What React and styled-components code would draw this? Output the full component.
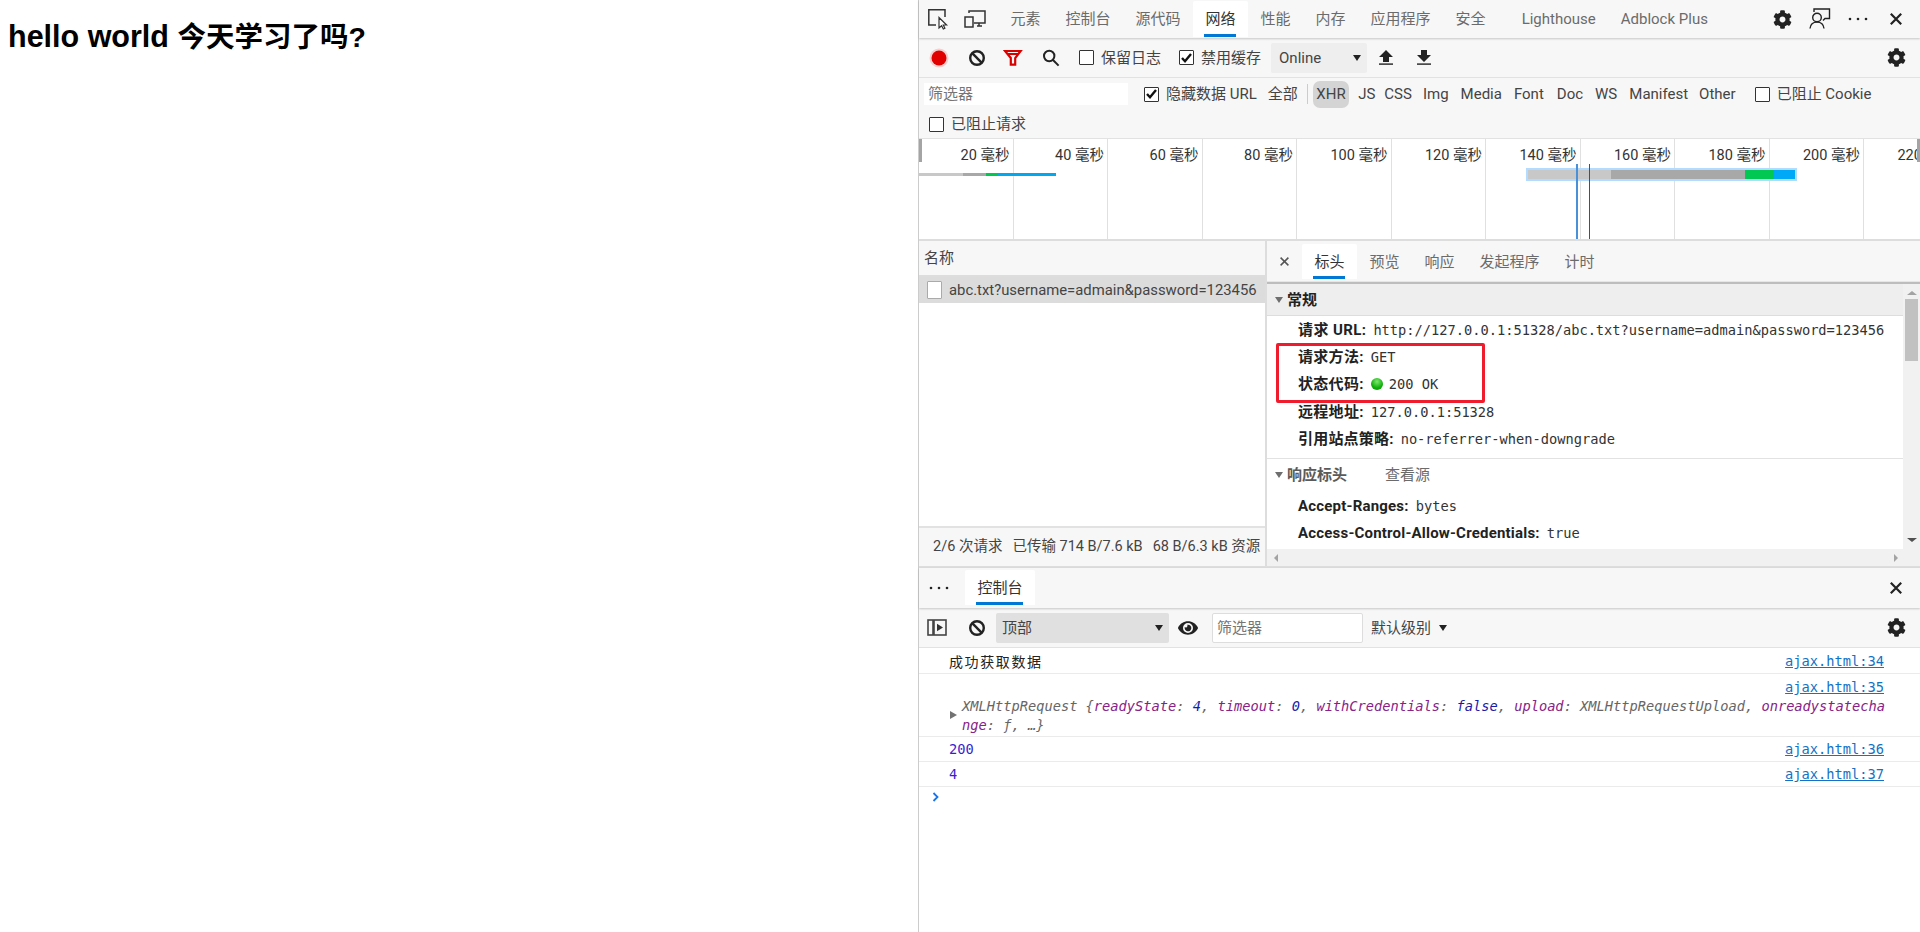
import React from 'react'
import styled, { createGlobalStyle } from 'styled-components'
import { FaCog, FaEye } from 'react-icons/fa'

const UI_FONT = `Roboto, "Noto Sans CJK SC", sans-serif`
const MONO_FONT = `"DejaVu Sans Mono", "Noto Sans CJK SC", monospace`

const GlobalStyle = createGlobalStyle`
  html, body { margin: 0; padding: 0; background: #fff; }
  body { font-family: ${UI_FONT}; font-size: 15px; color: #333; overflow: hidden; }
  * { box-sizing: border-box; }
`

const Page = styled.div`
  display: flex;
  height: 932px;
`

const Viewport = styled.main`
  width: 918px;
  flex: none;
  padding: 18px 8px;
  h1 {
    margin: 0;
    font: 700 30.5px/36px "Liberation Sans", "Noto Sans CJK SC", sans-serif;
    color: #000;
    span { font-size: 28.5px; }
  }
`

const DevTools = styled.section`
  flex: 1;
  min-width: 0;
  display: flex;
  flex-direction: column;
  border-left: 1px solid #ccc;
`

const TabBar = styled.div`
  display: flex;
  align-items: stretch;
  flex: none;
  height: ${p => p.$h}px;
  padding-top: ${p => p.$top || 0}px;
  padding-bottom: ${p => p.$bottom || 0}px;
  background: #f7f7f7;
  box-shadow: 0 1px 2px rgba(0, 0, 0, 0.2);
  position: relative;
  z-index: 1;
`

const Tab = styled.div`
  display: flex;
  align-items: center;
  justify-content: center;
  position: relative;
  padding: 0 12.5px;
  margin-left: ${p => p.$ml || 0}px;
  line-height: 20px;
  color: ${p => (p.$active ? '#333' : '#6b6b6b')};
  background: ${p => (p.$active ? '#fff' : 'transparent')};
  border-radius: 2px 2px 0 0;
  white-space: nowrap;
  ${p => p.$active && `
    &::after {
      content: '';
      position: absolute;
      left: 11px;
      right: 12px;
      bottom: 0;
      height: 3px;
      background: #0078d4;
    }
  `}
`

const IconSlot = styled.div`
  display: flex;
  align-items: center;
  justify-content: center;
  flex: none;
  width: ${p => p.$w || 24}px;
  margin-left: ${p => p.$ml || 0}px;
  color: #222;
`

const Spacer = styled.div`
  flex: ${p => (p.$w ? 'none' : 1)};
  width: ${p => (p.$w ? `${p.$w}px` : 'auto')};
`

const Toolbar = styled.div`
  display: flex;
  align-items: center;
  flex: none;
  height: ${p => p.$h}px;
  background: #f7f7f7;
  border-bottom: 1px solid #e2e2e2;
`

const Box = styled.span`
  display: flex;
  align-items: center;
  justify-content: center;
  flex: none;
  width: 15px;
  height: 15px;
  border: 1px solid #333;
  border-radius: 1px;
  background: #fff;
`

const CheckLabel = styled.label`
  display: flex;
  align-items: center;
  gap: 7px;
  margin-left: ${p => p.$ml || 0}px;
  line-height: 20px;
  white-space: nowrap;
  color: #444;
`

const SelectBox = styled.div`
  display: flex;
  align-items: center;
  justify-content: space-between;
  flex: none;
  width: ${p => p.$w}px;
  height: 30px;
  margin-left: ${p => p.$ml || 0}px;
  padding: 0 6px 0 ${p => p.$pl || 8}px;
  background: ${p => p.$bg};
  border-radius: 2px;
  color: #444;
  line-height: 20px;
`

const Caret = styled.span`
  display: inline-block;
  flex: none;
  width: 0;
  height: 0;
  margin: 0 ${p => p.$mx || 0}px;
  border-left: ${p => p.$size || 4.5}px solid transparent;
  border-right: ${p => p.$size || 4.5}px solid transparent;
  border-top: ${p => (p.$size || 4.5) * 1.5}px solid ${p => p.$color || '#222'};
`

const FilterBlock = styled.div`
  flex: none;
  height: 61px;
  background: #f7f7f7;
  border-bottom: 1px solid #e2e2e2;
  display: flex;
  flex-direction: column;
`

const FilterRow = styled.div`
  display: flex;
  align-items: center;
  height: ${p => p.$h}px;
  padding-left: ${p => p.$pl || 0}px;
`

const TextInput = styled.div`
  flex: none;
  width: ${p => p.$w}px;
  height: ${p => p.$h}px;
  margin-left: ${p => p.$ml || 0}px;
  padding-left: 4px;
  background: #fff;
  border: ${p => (p.$border ? '1px solid #ddd' : 'none')};
  border-radius: ${p => (p.$border ? 2 : 0)}px;
  color: #757575;
  display: flex;
  align-items: center;
  line-height: 20px;
`

const Sep = styled.span`
  flex: none;
  width: 1px;
  height: 20px;
  margin-left: ${p => p.$ml || 0}px;
  background: #ccc;
`

const TypeBtn = styled.span`
  flex: none;
  margin-left: ${p => p.$ml || 0}px;
  padding: ${p => (p.$active ? '3px 3.5px' : '0')};
  line-height: ${p => (p.$active ? '21px' : '20px')};
  color: #444;
  background: ${p => (p.$active ? '#d4d4d4' : 'transparent')};
  border-radius: 7px;
`

const Overview = styled.div`
  flex: none;
  height: 102px;
  position: relative;
  overflow: hidden;
  background: #fff;
  border-bottom: 2px solid #ddd;
`

const Ticks = styled.div`
  display: flex;
  height: 100%;
  width: 1100px;
`

const TickCell = styled.div`
  flex: none;
  width: 94.5px;
  height: 100%;
  padding: 7px 3px 0 0;
  border-right: 1px solid #e0e0e0;
  text-align: right;
  line-height: 20px;
  font-size: 14.5px;
  white-space: nowrap;
  color: #333;
`

const Grabber = styled.span`
  position: absolute;
  top: 0;
  ${p => p.$side}: 0;
  width: 3px;
  height: 23px;
  background: #a4a4a4;
`

const BarTrack = styled.div`
  position: absolute;
  left: ${p => p.$x}px;
  top: ${p => p.$y}px;
  height: ${p => p.$h}px;
  display: flex;
  ${p => p.$selected && `
    padding: 2px;
    height: 13px;
    background: #b3daff;
  `}
`

const BarPart = styled.span`
  display: block;
  flex: none;
  height: 100%;
  background: ${p => p.$c};
`

const VLine = styled.span`
  position: absolute;
  top: 25px;
  bottom: 0;
  left: ${p => p.$x}px;
  width: ${p => p.$w}px;
  background: ${p => p.$c};
`

const Split = styled.div`
  flex: none;
  height: 327px;
  display: flex;
  border-bottom: 2px solid #ddd;
`

const ListPane = styled.div`
  flex: none;
  width: 348px;
  display: flex;
  flex-direction: column;
  border-right: 2px solid #ddd;
`

const ListHeader = styled.div`
  flex: none;
  height: 36px;
  padding-left: 5px;
  display: flex;
  align-items: center;
  background: #f7f7f7;
  border-bottom: 2px solid #ddd;
  color: #444;
  line-height: 20px;
`

const ListRow = styled.div`
  flex: none;
  height: 26px;
  display: flex;
  align-items: center;
  padding-left: 8px;
  gap: 7px;
  background: #dcdcdc;
  color: #444;
  font-size: 14.85px;
  line-height: 20px;
  white-space: nowrap;
`

const FileIcon = styled.span`
  flex: none;
  width: 15px;
  height: 18px;
  background: #fff;
  border: 1px solid #aaa;
  border-radius: 1px;
`

const ListBody = styled.div`
  flex: 1;
  background: #fff;
`

const ListFooter = styled.div`
  flex: none;
  height: 40px;
  padding-left: 14px;
  display: flex;
  align-items: center;
  gap: 10px;
  background: #f7f7f7;
  border-top: 2px solid #e2e2e2;
  color: #444;
  font-size: 14.5px;
  line-height: 20px;
  white-space: nowrap;
`

const DetailPane = styled.div`
  flex: 1;
  min-width: 0;
  display: flex;
  flex-direction: column;
  position: relative;
`

const DetailTabs = styled.div`
  flex: none;
  height: 43px;
  padding: 3px 0 3px;
  display: flex;
  align-items: stretch;
  background: #f7f7f7;
  border-bottom: 2px solid #bdbdbd;
  box-shadow: inset 0 -1px 0 #e6e6e6;
`

const CloseMini = styled.div`
  flex: none;
  width: 35px;
  display: flex;
  align-items: center;
  justify-content: center;
  color: #555;
`

const DetailMiddle = styled.div`
  flex: 1;
  min-height: 0;
  display: flex;
`

const DetailScroll = styled.div`
  flex: 1;
  min-width: 0;
  display: flex;
  flex-direction: column;
`

const SectionHead = styled.div`
  flex: none;
  display: flex;
  align-items: center;
  height: ${p => p.$h}px;
  padding-left: 8px;
  gap: 4px;
  background: ${p => (p.$tinted ? '#eeeeee' : '#fff')};
  border-bottom: ${p => (p.$tinted ? '1px solid #ddd' : 'none')};
  font-weight: 700;
  line-height: 20px;
  color: ${p => (p.$tinted ? '#222' : '#5a5a5a')};
  span.source {
    margin-left: 34px;
    font-weight: 400;
    color: #6b6b6b;
  }
`

const Rows = styled.div`
  flex: none;
  padding: ${p => p.$pad};
  border-bottom: ${p => (p.$divided ? '1px solid #e2e2e2' : 'none')};
  background: #fff;
`

const HeaderRow = styled.div`
  display: flex;
  align-items: center;
  height: 27.4px;
  padding-left: 31px;
  white-space: nowrap;
  line-height: 20px;
  code {
    font: 13.7px/20px ${MONO_FONT};
    color: #333;
  }
`

const Label = styled.b`
  font-weight: 700;
  color: #222;
  margin-right: 7px;
  letter-spacing: ${p => p.$ls || 0}px;
`

const StatusDot = styled.span`
  flex: none;
  width: 12px;
  height: 12px;
  margin-right: 6px;
  border-radius: 50%;
  background: radial-gradient(circle at 50% 30%, #7fe86f, #0fae0a 60%, #0a9a08);
`

const HighlightBox = styled.div`
  position: absolute;
  left: 9px;
  top: 102px;
  width: 209px;
  height: 60px;
  border: 3.5px solid #ee1c2c;
  border-radius: 2px;
  pointer-events: none;
`

const VScroll = styled.div`
  flex: none;
  width: 17px;
  display: flex;
  flex-direction: column;
  align-items: center;
  background: #f1f1f1;
`

const Thumb = styled.span`
  flex: none;
  width: 13px;
  height: 62px;
  margin-top: 4px;
  background: #c1c1c1;
`

const HScroll = styled.div`
  flex: none;
  height: 17px;
  display: flex;
  align-items: center;
  justify-content: space-between;
  padding: 0 22px 0 7px;
  background: #f1f1f1;
`

const Tri = styled.span`
  display: block;
  flex: none;
  width: 0;
  height: 0;
  ${p => p.$dir === 'left' && 'border-top: 4px solid transparent; border-bottom: 4px solid transparent; border-right: 4px solid #a3a3a3;'}
  ${p => p.$dir === 'right' && 'border-top: 4px solid transparent; border-bottom: 4px solid transparent; border-left: 4px solid #a3a3a3;'}
  ${p => p.$dir === 'up' && 'margin-top: 7px; border-left: 5px solid transparent; border-right: 5px solid transparent; border-bottom: 4px solid #a3a3a3;'}
  ${p => p.$dir === 'down' && 'margin-bottom: 7px; border-left: 5px solid transparent; border-right: 5px solid transparent; border-top: 4px solid #505050;'}
`

const ConsoleLog = styled.div`
  flex: 1;
  background: #fff;
  font: 13.7px/18px ${MONO_FONT};
`

const LogRow = styled.div`
  display: flex;
  justify-content: space-between;
  height: ${p => p.$h}px;
  padding: ${p => p.$top || 3}px 36px 0 30px;
  border-bottom: 1px solid #ebebeb;
  line-height: 18px;
  color: ${p => p.$color || '#222'};
  white-space: nowrap;
`

const CjkText = styled.span`
  font-family: "Noto Sans CJK SC", sans-serif;
  font-size: 14px;
  letter-spacing: 1.6px;
`

const SourceLink = styled.a`
  color: #1472c4;
  text-decoration: underline;
`

const ObjectRow = styled.div`
  position: relative;
  height: 63px;
  padding: 4px 36px 0 43px;
  border-bottom: 1px solid #ebebeb;
  white-space: nowrap;
  text-align: left;
`

const ObjLink = styled.div`
  text-align: right;
  height: 19px;
  line-height: 18px;
`

const ObjLine = styled.div`
  font-style: italic;
  color: #666;
  height: 18.5px;
  line-height: 18.5px;
  i { font-style: italic; color: #882288; }
  em { font-style: italic; color: #1a1aa6; }
`

const ExpandTri = styled.span`
  position: absolute;
  left: 31px;
  top: 37px;
  width: 0;
  height: 0;
  border-top: 4.5px solid transparent;
  border-bottom: 4.5px solid transparent;
  border-left: 7px solid #727272;
`

const Prompt = styled.div`
  padding: 5px 0 0 13px;
  color: #1a73e8;
  display: flex;
`

const InspectIcon = () => (
  <svg width="22" height="22" viewBox="0 0 22 22" fill="none" stroke="#333" strokeWidth="1.5">
    <path d="M9 17H1.8V1.8H18V9" />
    <path d="M12 9.5v10.5l2.6-2.2 1.7 3.2 1.6-.8-1.6-3.2h3.3z" fill="#fff" strokeWidth="1.2" />
  </svg>
)

const DeviceIcon = () => (
  <svg width="22" height="20" viewBox="0 0 22 20" fill="none" stroke="#333" strokeWidth="1.5">
    <path d="M5 4V2h16v12H10" />
    <rect x="1" y="8" width="8" height="10" />
    <path d="M13 17h5M15 14v3" />
  </svg>
)

const BlockIcon = () => (
  <svg width="18" height="18" viewBox="0 0 18 18" fill="none" stroke="#222" strokeWidth="2.4">
    <circle cx="9" cy="9" r="6.8" />
    <path d="M4.2 4.2l9.6 9.6" />
  </svg>
)

const FunnelIcon = () => (
  <svg width="20" height="18" viewBox="0 0 20 18" fill="none" stroke="#d90000" strokeWidth="2.2">
    <path d="M2 2h15.6l-5.4 7v6.6h-4.4V9z" />
    <path d="M4 5h12" strokeWidth="2" />
  </svg>
)

const SearchIcon = () => (
  <svg width="18" height="18" viewBox="0 0 18 18" fill="none" stroke="#222" strokeWidth="2">
    <circle cx="7.2" cy="7" r="5.2" />
    <path d="M11 11l5.6 5.6" />
  </svg>
)

const RecordDot = () => (
  <svg width="20" height="20" viewBox="0 0 20 20">
    <circle cx="10" cy="10" r="9.5" fill="#f6cfcf" />
    <circle cx="10" cy="10" r="7.5" fill="#e00000" />
  </svg>
)

const ArrowBar = ({ down }) => (
  <svg width="14" height="15" viewBox="0 0 14 15" fill="#222">
    {down ? <path d="M4 0h6v5h4l-7 7-7-7h4z" /> : <path d="M7 0l7 7h-4v5H4V7H0z" />}
    <rect y="13.4" width="14" height="1.4" />
  </svg>
)

const FeedbackIcon = () => (
  <svg width="22" height="22" viewBox="0 0 22 22" fill="none" stroke="#222" strokeWidth="1.4">
    <circle cx="8" cy="9.5" r="4.3" />
    <path d="M1 20.5c.4-4 3-6.4 7-6.4s6.6 2.4 7 6.4" />
    <path d="M5 4V1h15.5v9.5H16l-2 2" />
  </svg>
)

const Dots = () => (
  <svg width="20" height="4" viewBox="0 0 20 4" fill="#222">
    <circle cx="2" cy="2" r="1.3" />
    <circle cx="10" cy="2" r="1.3" />
    <circle cx="18" cy="2" r="1.3" />
  </svg>
)

const CloseIcon = ({ size = 12, weight = 2.2 }) => (
  <svg width={size} height={size} viewBox="0 0 12 12" fill="none" stroke="currentColor" strokeWidth={weight}>
    <path d="M.8.8l10.4 10.4M11.2.8L.8 11.2" />
  </svg>
)

const CheckMark = () => (
  <svg width="11" height="10" viewBox="0 0 11 10" fill="none" stroke="#111" strokeWidth="2.4">
    <path d="M1 5l3 3.2L10 1" />
  </svg>
)

const SidebarIcon = () => (
  <svg width="20" height="17" viewBox="0 0 20 17" fill="none" stroke="#444" strokeWidth="1.6">
    <rect x="1" y="1" width="18" height="15" />
    <path d="M6.5 1v15" strokeWidth="2.6" />
    <path d="M10 4.8l6 3.7-6 3.7z" fill="#333" stroke="none" />
  </svg>
)

const Check = ({ checked, children, ml }) => (
  <CheckLabel $ml={ml}>
    <Box>{checked && <CheckMark />}</Box>
    {children}
  </CheckLabel>
)

const MAIN_TABS = ['元素', '控制台', '源代码', '网络', '性能', '内存', '应用程序', '安全']
const DETAIL_TABS = ['标头', '预览', '响应', '发起程序', '计时']
const TICKS = [20, 40, 60, 80, 100, 120, 140, 160, 180, 200, 220]
const TYPES = [
  ['JS', 9], ['CSS', 9], ['Img', 11], ['Media', 12], ['Font', 12],
  ['Doc', 13], ['WS', 12], ['Manifest', 12], ['Other', 11],
]

const App = () => {
  return <Page>
    <GlobalStyle />
    <Viewport>
      <h1>hello world <span>今天学习了吗?</span></h1>
    </Viewport>

    <DevTools>
      {/* top tabs */}
      <TabBar $h={38} $top={1} $bottom={1}>
        <IconSlot $w={24} $ml={7}><InspectIcon /></IconSlot>
        <IconSlot $w={24} $ml={13}><DeviceIcon /></IconSlot>
        <Spacer $w={11} />
        {MAIN_TABS.map(t => <Tab key={t} $active={t === '网络'}>{t}</Tab>)}
        <Tab $ml={11}>Lighthouse</Tab>
        <Tab>Adblock Plus</Tab>
        <Spacer />
        <IconSlot $w={24}><FaCog size={19} /></IconSlot>
        <IconSlot $w={24} $ml={14}><FeedbackIcon /></IconSlot>
        <IconSlot $w={24} $ml={14}><Dots /></IconSlot>
        <IconSlot $w={24} $ml={14}><CloseIcon /></IconSlot>
        <Spacer $w={12} />
      </TabBar>

      {/* network toolbar */}
      <Toolbar $h={40}>
        <IconSlot $w={24} $ml={8}><RecordDot /></IconSlot>
        <IconSlot $w={24} $ml={14}><BlockIcon /></IconSlot>
        <IconSlot $w={24} $ml={12}><FunnelIcon /></IconSlot>
        <IconSlot $w={24} $ml={14}><SearchIcon /></IconSlot>
        <Check ml={16}>保留日志</Check>
        <Check checked ml={18}>禁用缓存</Check>
        <SelectBox $w={96} $bg="#eeeeee" $ml={10}>Online<Caret /></SelectBox>
        <IconSlot $w={24} $ml={7}><ArrowBar /></IconSlot>
        <IconSlot $w={24} $ml={14}><ArrowBar down /></IconSlot>
        <Spacer />
        <IconSlot $w={24}><FaCog size={19} /></IconSlot>
        <Spacer $w={12} />
      </Toolbar>

      {/* filter rows */}
      <FilterBlock>
        <FilterRow $pl={5} $h={32}>
          <TextInput $w={204} $h={22}>筛选器</TextInput>
          <Check checked ml={16}>隐藏数据 URL</Check>
          <TypeBtn $ml={11}>全部</TypeBtn>
          <Sep $ml={9} />
          <TypeBtn $ml={5} $active>XHR</TypeBtn>
          {TYPES.map(([t, ml]) => <TypeBtn key={t} $ml={ml}>{t}</TypeBtn>)}
          <Check ml={19}>已阻止 Cookie</Check>
        </FilterRow>
        <FilterRow $pl={10} $h={28}>
          <Check>已阻止请求</Check>
        </FilterRow>
      </FilterBlock>

      {/* timeline overview */}
      <Overview>
        <Ticks>
          {TICKS.map(t => <TickCell key={t}>{t} 毫秒</TickCell>)}
        </Ticks>
        <Grabber $side="left" />
        <Grabber $side="right" />
        <BarTrack $x={0} $y={34} $h={3}>
          <BarPart $c="#c8c8c8" style={{ width: 44 }} />
          <BarPart $c="#a8a8a8" style={{ width: 23 }} />
          <BarPart $c="#00c853" style={{ width: 12 }} />
          <BarPart $c="#00a8f0" style={{ width: 58 }} />
        </BarTrack>
        <BarTrack $x={607} $y={29} $selected>
          <BarPart $c="#c8c8c8" style={{ width: 83 }} />
          <BarPart $c="#a8a8a8" style={{ width: 134 }} />
          <BarPart $c="#00c853" style={{ width: 28 }} />
          <BarPart $c="#00a8f8" style={{ width: 22 }} />
        </BarTrack>
        <VLine $x={657} $w={2} $c="#4a90d9" />
        <VLine $x={670} $w={1} $c="#cc1a1a" />
      </Overview>

      {/* request list and details */}
      <Split>
        <ListPane>
          <ListHeader>名称</ListHeader>
          <ListRow>
            <FileIcon />
            abc.txt?username=admain&amp;password=123456
          </ListRow>
          <ListBody />
          <ListFooter>
            <span>2/6 次请求</span>
            <span>已传输 714 B/7.6 kB</span>
            <span>68 B/6.3 kB 资源</span>
          </ListFooter>
        </ListPane>

        <DetailPane>
          <DetailTabs>
            <CloseMini><CloseIcon size={9} weight={2} /></CloseMini>
            {DETAIL_TABS.map(t => <Tab key={t} $active={t === '标头'}>{t}</Tab>)}
          </DetailTabs>
          <DetailMiddle>
            <DetailScroll>
              <SectionHead $tinted $h={32}><Caret $color="#6e6e6e" />常规</SectionHead>
              <Rows $divided $pad="0 0 5px">
                <HeaderRow><Label $ls={0.4}>请求 URL:</Label><code>http://127.0.0.1:51328/abc.txt?username=admain&amp;password=123456</code></HeaderRow>
                <HeaderRow><Label $ls={0.3}>请求方法:</Label><code>GET</code></HeaderRow>
                <HeaderRow><Label $ls={0.3}>状态代码:</Label><StatusDot /><code>200 OK</code></HeaderRow>
                <HeaderRow><Label $ls={0.3}>远程地址:</Label><code>127.0.0.1:51328</code></HeaderRow>
                <HeaderRow><Label $ls={0.2}>引用站点策略:</Label><code>no-referrer-when-downgrade</code></HeaderRow>
              </Rows>
              <SectionHead $h={33}><Caret $color="#6e6e6e" />响应标头<span className="source">查看源</span></SectionHead>
              <Rows $pad="0">
                <HeaderRow><Label $ls={0.2}>Accept-Ranges:</Label><code>bytes</code></HeaderRow>
                <HeaderRow><Label $ls={0.2}>Access-Control-Allow-Credentials:</Label><code>true</code></HeaderRow>
              </Rows>
            </DetailScroll>
            <VScroll>
              <Tri $dir="up" />
              <Thumb />
              <Spacer />
              <Tri $dir="down" />
            </VScroll>
          </DetailMiddle>
          <HScroll><Tri $dir="left" /><Tri $dir="right" /></HScroll>
          <HighlightBox />
        </DetailPane>
      </Split>

      {/* console drawer */}
      <TabBar $h={40} $top={2} $bottom={3}>
        <IconSlot $w={24} $ml={8}><Dots /></IconSlot>
        <Spacer $w={14} />
        <Tab $active>控制台</Tab>
        <Spacer />
        <IconSlot $w={24}><CloseIcon /></IconSlot>
        <Spacer $w={12} />
      </TabBar>
      <Toolbar $h={40}>
        <IconSlot $w={24} $ml={6}><SidebarIcon /></IconSlot>
        <IconSlot $w={24} $ml={16}><BlockIcon /></IconSlot>
        <SelectBox $w={173} $bg="#e0e0e0" $ml={7} $pl={6}>顶部<Caret /></SelectBox>
        <IconSlot $w={24} $ml={7}><FaEye size={20} /></IconSlot>
        <TextInput $w={151} $h={30} $ml={12} $border>筛选器</TextInput>
        <CheckLabel $ml={8}>默认级别<Caret $mx={1} /></CheckLabel>
        <Spacer />
        <IconSlot $w={24}><FaCog size={19} /></IconSlot>
        <Spacer $w={12} />
      </Toolbar>

      <ConsoleLog>
        <LogRow $h={26} $top={4}>
          <CjkText>成功获取数据</CjkText>
          <SourceLink>ajax.html:34</SourceLink>
        </LogRow>
        <ObjectRow>
          <ExpandTri />
          <ObjLink><SourceLink>ajax.html:35</SourceLink></ObjLink>
          <ObjLine>XMLHttpRequest {'{'}<i>readyState</i>: <em>4</em>, <i>timeout</i>: <em>0</em>, <i>withCredentials</i>: <em>false</em>, <i>upload</i>: XMLHttpRequestUpload, <i>onreadystatecha</i></ObjLine>
          <ObjLine><i>nge</i>: ƒ, …{'}'}</ObjLine>
        </ObjectRow>
        <LogRow $h={25} $color="#3a1fd1">
          <span>200</span>
          <SourceLink>ajax.html:36</SourceLink>
        </LogRow>
        <LogRow $h={25} $color="#3a1fd1">
          <span>4</span>
          <SourceLink>ajax.html:37</SourceLink>
        </LogRow>
        <Prompt>
          <svg width="8" height="10" viewBox="0 0 8 10" fill="none" stroke="#1a73e8" strokeWidth="1.8">
            <path d="M1.5 1l4 4-4 4" />
          </svg>
        </Prompt>
      </ConsoleLog>
    </DevTools>
  </Page>
}

export default App
